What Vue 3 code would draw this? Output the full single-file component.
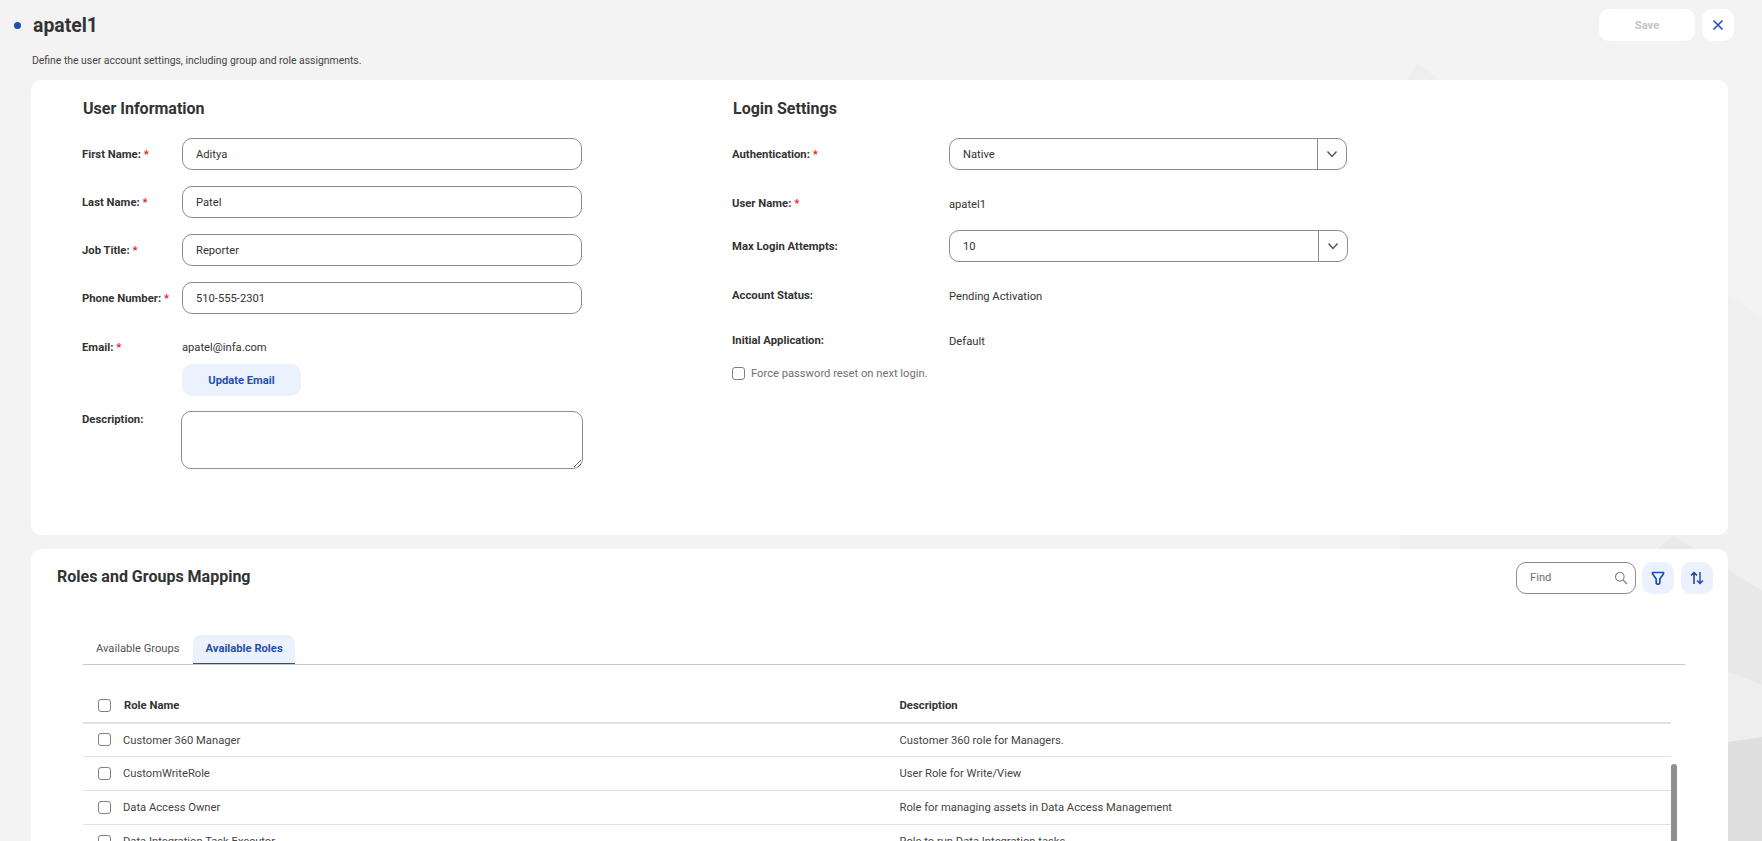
<template>
  <div class="page">
    <svg class="bg-shapes" viewBox="0 0 1762 841" preserveAspectRatio="none">
      <polygon points="1408,80 1417,63 1440,80" fill="#eeeeee" />
      <polygon points="1728,294 1762,317 1762,841 1400,841 1400,535 1728,535" fill="#f0f0f0" />
      <polygon points="1658,549 1673,536 1695,549" fill="#e9e9e9" />
      <polygon points="1728,570 1762,591 1762,685 1728,672" fill="#e8e8e8" />
      <polygon points="1728,672 1762,685 1762,737 1728,742" fill="#eeeeee" />
      <polygon points="1728,742 1762,737 1762,841 1728,841" fill="#dfdfdf" />
    </svg>

    <header class="top">
      <div class="title-row">
        <span class="dot"></span>
        <h1>apatel1</h1>
        <div class="actions">
          <button class="save">Save</button>
          <button class="close">
            <svg width="14" height="14" viewBox="0 0 14 14"><path d="M2.5 2.5l9 9M11.5 2.5l-9 9" stroke="#1f4fb0" stroke-width="1.6" fill="none" /></svg>
          </button>
        </div>
      </div>
      <p class="sub">Define the user account settings, including group and role assignments.</p>
    </header>

    <section class="card info">
      <div class="col user">
        <h2>User Information</h2>
        <div class="field" v-for="f in userFields" :key="f.label">
          <label>{{ f.label }} <i>*</i></label>
          <div class="input">{{ f.value }}</div>
        </div>
        <div class="field email">
          <label>Email: <i>*</i></label>
          <div>
            <div class="plain">apatel@infa.com</div>
            <button class="update">Update Email</button>
          </div>
        </div>
        <div class="field desc">
          <label>Description:</label>
          <textarea></textarea>
        </div>
      </div>

      <div class="col login">
        <h2>Login Settings</h2>
        <div class="lrow auth">
          <label>Authentication: <i>*</i></label>
          <div class="select">
            <span>Native</span>
            <div class="caret">
              <svg width="14" height="14" viewBox="0 0 14 14"><path d="M2.5 4.5L7 9.5l4.5-5" stroke="#555" stroke-width="1.4" fill="none" /></svg>
            </div>
          </div>
        </div>
        <div class="lrow uname">
          <label>User Name: <i>*</i></label>
          <div class="plain">apatel1</div>
        </div>
        <div class="lrow max">
          <label>Max Login Attempts:</label>
          <div class="select wide">
            <span>10</span>
            <div class="caret">
              <svg width="14" height="14" viewBox="0 0 14 14"><path d="M2.5 4.5L7 9.5l4.5-5" stroke="#555" stroke-width="1.4" fill="none" /></svg>
            </div>
          </div>
        </div>
        <div class="lrow status">
          <label>Account Status:</label>
          <div class="plain">Pending Activation</div>
        </div>
        <div class="lrow initial">
          <label>Initial Application:</label>
          <div class="plain">Default</div>
        </div>
        <div class="force">
          <span class="check"></span>
          <span>Force password reset on next login.</span>
        </div>
      </div>
    </section>

    <section class="card roles">
      <div class="roles-head">
        <h2>Roles and Groups Mapping</h2>
        <div class="tools">
          <div class="find">
            <span>Find</span>
            <svg width="14" height="14" viewBox="0 0 14 14"><circle cx="5.8" cy="5.8" r="4.3" stroke="#808080" stroke-width="1.1" fill="none" /><path d="M9 9l4 4" stroke="#808080" stroke-width="1.2" /></svg>
          </div>
          <button class="icon-btn">
            <svg width="16" height="16" viewBox="0 0 16 16"><path d="M2.5 2.5h11v1.2L9.8 9v4l-1 1.2H7.2L6.2 13.2V9L2.5 3.7z" stroke="#1f4fb0" stroke-width="1.7" fill="none" stroke-linejoin="round" /></svg>
          </button>
          <button class="icon-btn">
            <svg width="16" height="16" viewBox="0 0 16 16"><path d="M5 14V2.5M2 5.5l3-3 3 3" stroke="#1c3f85" stroke-width="1.5" fill="none" /><path d="M11 2v11.5M8 10.5l3 3 3-3" stroke="#1f4fb0" stroke-width="1.5" fill="none" /></svg>
          </button>
        </div>
      </div>

      <div class="tabs">
        <div class="tab">Available Groups</div>
        <div class="tab active">Available Roles</div>
      </div>

      <div class="table-wrap">
        <div class="thead">
          <span class="check"></span>
          <div class="c-name">Role Name</div>
          <div class="c-desc">Description</div>
        </div>
        <div class="tbody">
          <div class="row" v-for="r in rows" :key="r.name">
            <span class="check"></span>
            <div class="c-name">{{ r.name }}</div>
            <div class="c-desc">{{ r.desc }}</div>
          </div>
          <div class="scrollbar"></div>
        </div>
      </div>
    </section>
  </div>
</template>

<script setup>
const userFields = [
  { label: 'First Name:', value: 'Aditya' },
  { label: 'Last Name:', value: 'Patel' },
  { label: 'Job Title:', value: 'Reporter' },
  { label: 'Phone Number:', value: '510-555-2301' }
]

const rows = [
  { name: 'Customer 360 Manager', desc: 'Customer 360 role for Managers.' },
  { name: 'CustomWriteRole', desc: 'User Role for Write/View' },
  { name: 'Data Access Owner', desc: 'Role for managing assets in Data Access Management' },
  { name: 'Data Integration Task Executor', desc: 'Role to run Data Integration tasks' }
]
</script>

<style scoped>
.page {
  position: relative;
  width: 1762px;
  height: 841px;
  overflow: hidden;
  background: #f3f3f3;
  font-family: Roboto, "Liberation Sans", sans-serif;
  font-size: 11.2px;
  color: #333;
}

.bg-shapes {
  position: absolute;
  inset: 0;
  width: 100%;
  height: 100%;
}

.top {
  position: relative;
  height: 80px;
  padding: 9px 28px 0 14px;
  box-sizing: border-box;
}

.title-row {
  display: flex;
  align-items: center;
  height: 32px;
}

.dot {
  width: 7px;
  height: 7px;
  border-radius: 50%;
  background: #1f4fb0;
  margin-right: 12px;
}

h1 {
  margin: 0;
  font-size: 19.4px;
  font-weight: 700;
  color: #333;
}

.actions {
  margin-left: auto;
  display: flex;
  gap: 7px;
}

button {
  border: 0;
  font-family: inherit;
  cursor: pointer;
}

.save {
  width: 96px;
  height: 32px;
  border-radius: 10px;
  background: #fff;
  color: #c4c4c4;
  font-size: 11.2px;
  font-weight: 700;
}

.close {
  width: 32px;
  height: 32px;
  border-radius: 10px;
  background: #fff;
  display: flex;
  align-items: center;
  justify-content: center;
  padding: 0;
}

.sub {
  margin: 13px 0 0 18px;
  font-size: 10.4px;
  line-height: 13px;
  color: #444;
}

.card {
  position: relative;
  margin: 0 34px 0 31px;
  background: #fff;
  border-radius: 10px;
}

.info {
  height: 455px;
  display: flex;
  padding-left: 51px;
  box-sizing: border-box;
}

.col h2 {
  margin: 0;
  padding: 20px 0 0 1px;
  height: 58px;
  box-sizing: border-box;
  font-size: 16px;
  line-height: 18px;
  font-weight: 700;
  color: #333;
}

.user {
  width: 650px;
}

label {
  font-weight: 700;
  font-size: 11.3px;
  color: #333;
}

label i {
  font-style: normal;
  color: #d9262c;
}

.field {
  display: flex;
  align-items: center;
  height: 32px;
  margin-bottom: 16px;
}

.field label {
  width: 100px;
  flex: none;
}

.input {
  width: 400px;
  height: 32px;
  box-sizing: border-box;
  border: 1px solid #8c8c8c;
  border-radius: 10px;
  padding: 1px 13px 0;
  line-height: 30px;
  background: #fff;
}

.plain {
  color: #333;
  line-height: 16px;
}

.email {
  height: auto;
  align-items: flex-start;
  margin: 26px 0 0;
}

.email label {
  line-height: 16px;
}

.update {
  display: block;
  width: 119px;
  height: 32px;
  margin-top: 8px;
  border-radius: 10px;
  background: #ebf2fd;
  color: #1f4fb0;
  font-size: 11.2px;
  font-weight: 700;
}

.desc {
  height: auto;
  align-items: flex-start;
  margin-top: 15px;
}

.desc label {
  width: 99px;
  line-height: 16px;
  padding-top: 1px;
}

textarea {
  width: 402px;
  height: 58px;
  box-sizing: border-box;
  border: 1px solid #8c8c8c;
  border-radius: 10px;
  outline: 0;
  background: #fff;
}

.login {
  width: 640px;
}

.lrow {
  display: flex;
  align-items: center;
}

.lrow label {
  width: 217px;
  flex: none;
}

.lrow .plain {
  padding-top: 3px;
}

.auth { height: 32px; }
.uname { height: 16px; margin-top: 25px; }
.max { height: 32px; margin-top: 19px; }
.status { height: 16px; margin-top: 25px; }
.initial { height: 16px; margin-top: 29px; }

.select {
  width: 398px;
  height: 32px;
  box-sizing: border-box;
  border: 1px solid #8c8c8c;
  border-radius: 10px;
  display: flex;
  align-items: center;
  padding-left: 13px;
}

.select.wide {
  width: 399px;
}

.select span {
  flex: 1;
}

.caret {
  width: 28px;
  height: 100%;
  border-left: 1px solid #8c8c8c;
  display: flex;
  align-items: center;
  justify-content: center;
}

.check {
  display: block;
  flex: none;
  width: 13px;
  height: 13px;
  box-sizing: border-box;
  border: 1px solid #808080;
  border-radius: 3px;
  background: #fff;
}

.force {
  display: flex;
  align-items: center;
  gap: 6px;
  margin-top: 19px;
  color: #6f6f6f;
}

.roles {
  margin-top: 14px;
  height: 310px;
  overflow: hidden;
}

.roles-head {
  display: flex;
  justify-content: space-between;
  align-items: center;
  padding: 13px 15px 0 26px;
}

.roles-head h2 {
  margin: 0 0 3px;
  font-size: 16px;
  font-weight: 700;
  color: #333;
}

.tools {
  display: flex;
  gap: 7px;
}

.find {
  width: 120px;
  height: 32px;
  box-sizing: border-box;
  border: 1px solid #8c8c8c;
  border-radius: 10px;
  display: flex;
  align-items: center;
  justify-content: space-between;
  padding: 0 7px 1px 13px;
  color: #707070;
  margin-right: -1px;
}

.icon-btn {
  width: 32px;
  height: 32px;
  border-radius: 10px;
  background: #ebf2fd;
  padding: 0;
  display: flex;
  align-items: center;
  justify-content: center;
}

.tabs {
  display: flex;
  margin: 41px 43px 0 52px;
  height: 30px;
  box-sizing: border-box;
  border-bottom: 1px solid #c8c8c8;
}

.tab {
  padding: 0 13px;
  line-height: 28px;
  height: 29px;
  color: #555;
  white-space: nowrap;
}

.tab.active {
  width: 102px;
  box-sizing: border-box;
  background: #ebf2fd;
  color: #1f4fb0;
  font-weight: 700;
  border-bottom: 1px solid #1f4fb0;
  border-radius: 8px 8px 0 0;
}

.table-wrap {
  margin: 0 57px 0 52px;
}

.thead {
  display: flex;
  align-items: center;
  height: 59px;
  padding-top: 24px;
  box-sizing: border-box;
  border-bottom: 2px solid #e2e2e2;
  font-weight: 700;
  font-size: 11.3px;
}

.thead .c-name {
  padding-left: 13px;
}

.thead .check,
.row .check {
  margin: -1px 0 0 15px;
}

.c-name {
  width: 788.5px;
  flex: none;
  padding-left: 12px;
  box-sizing: border-box;
}

.tbody {
  position: relative;
}

.row {
  display: flex;
  align-items: center;
  height: 34px;
  box-sizing: border-box;
  border-bottom: 1px solid #e2e2e2;
  color: #444;
}

.row:first-child {
  height: 33px;
}

.scrollbar {
  position: absolute;
  top: 40px;
  right: -6px;
  width: 6px;
  height: 200px;
  background: #8f8f8f;
  border-radius: 3px 3px 0 0;
}
</style>

<style>
html, body {
  margin: 0;
  overflow: hidden;
}
</style>
